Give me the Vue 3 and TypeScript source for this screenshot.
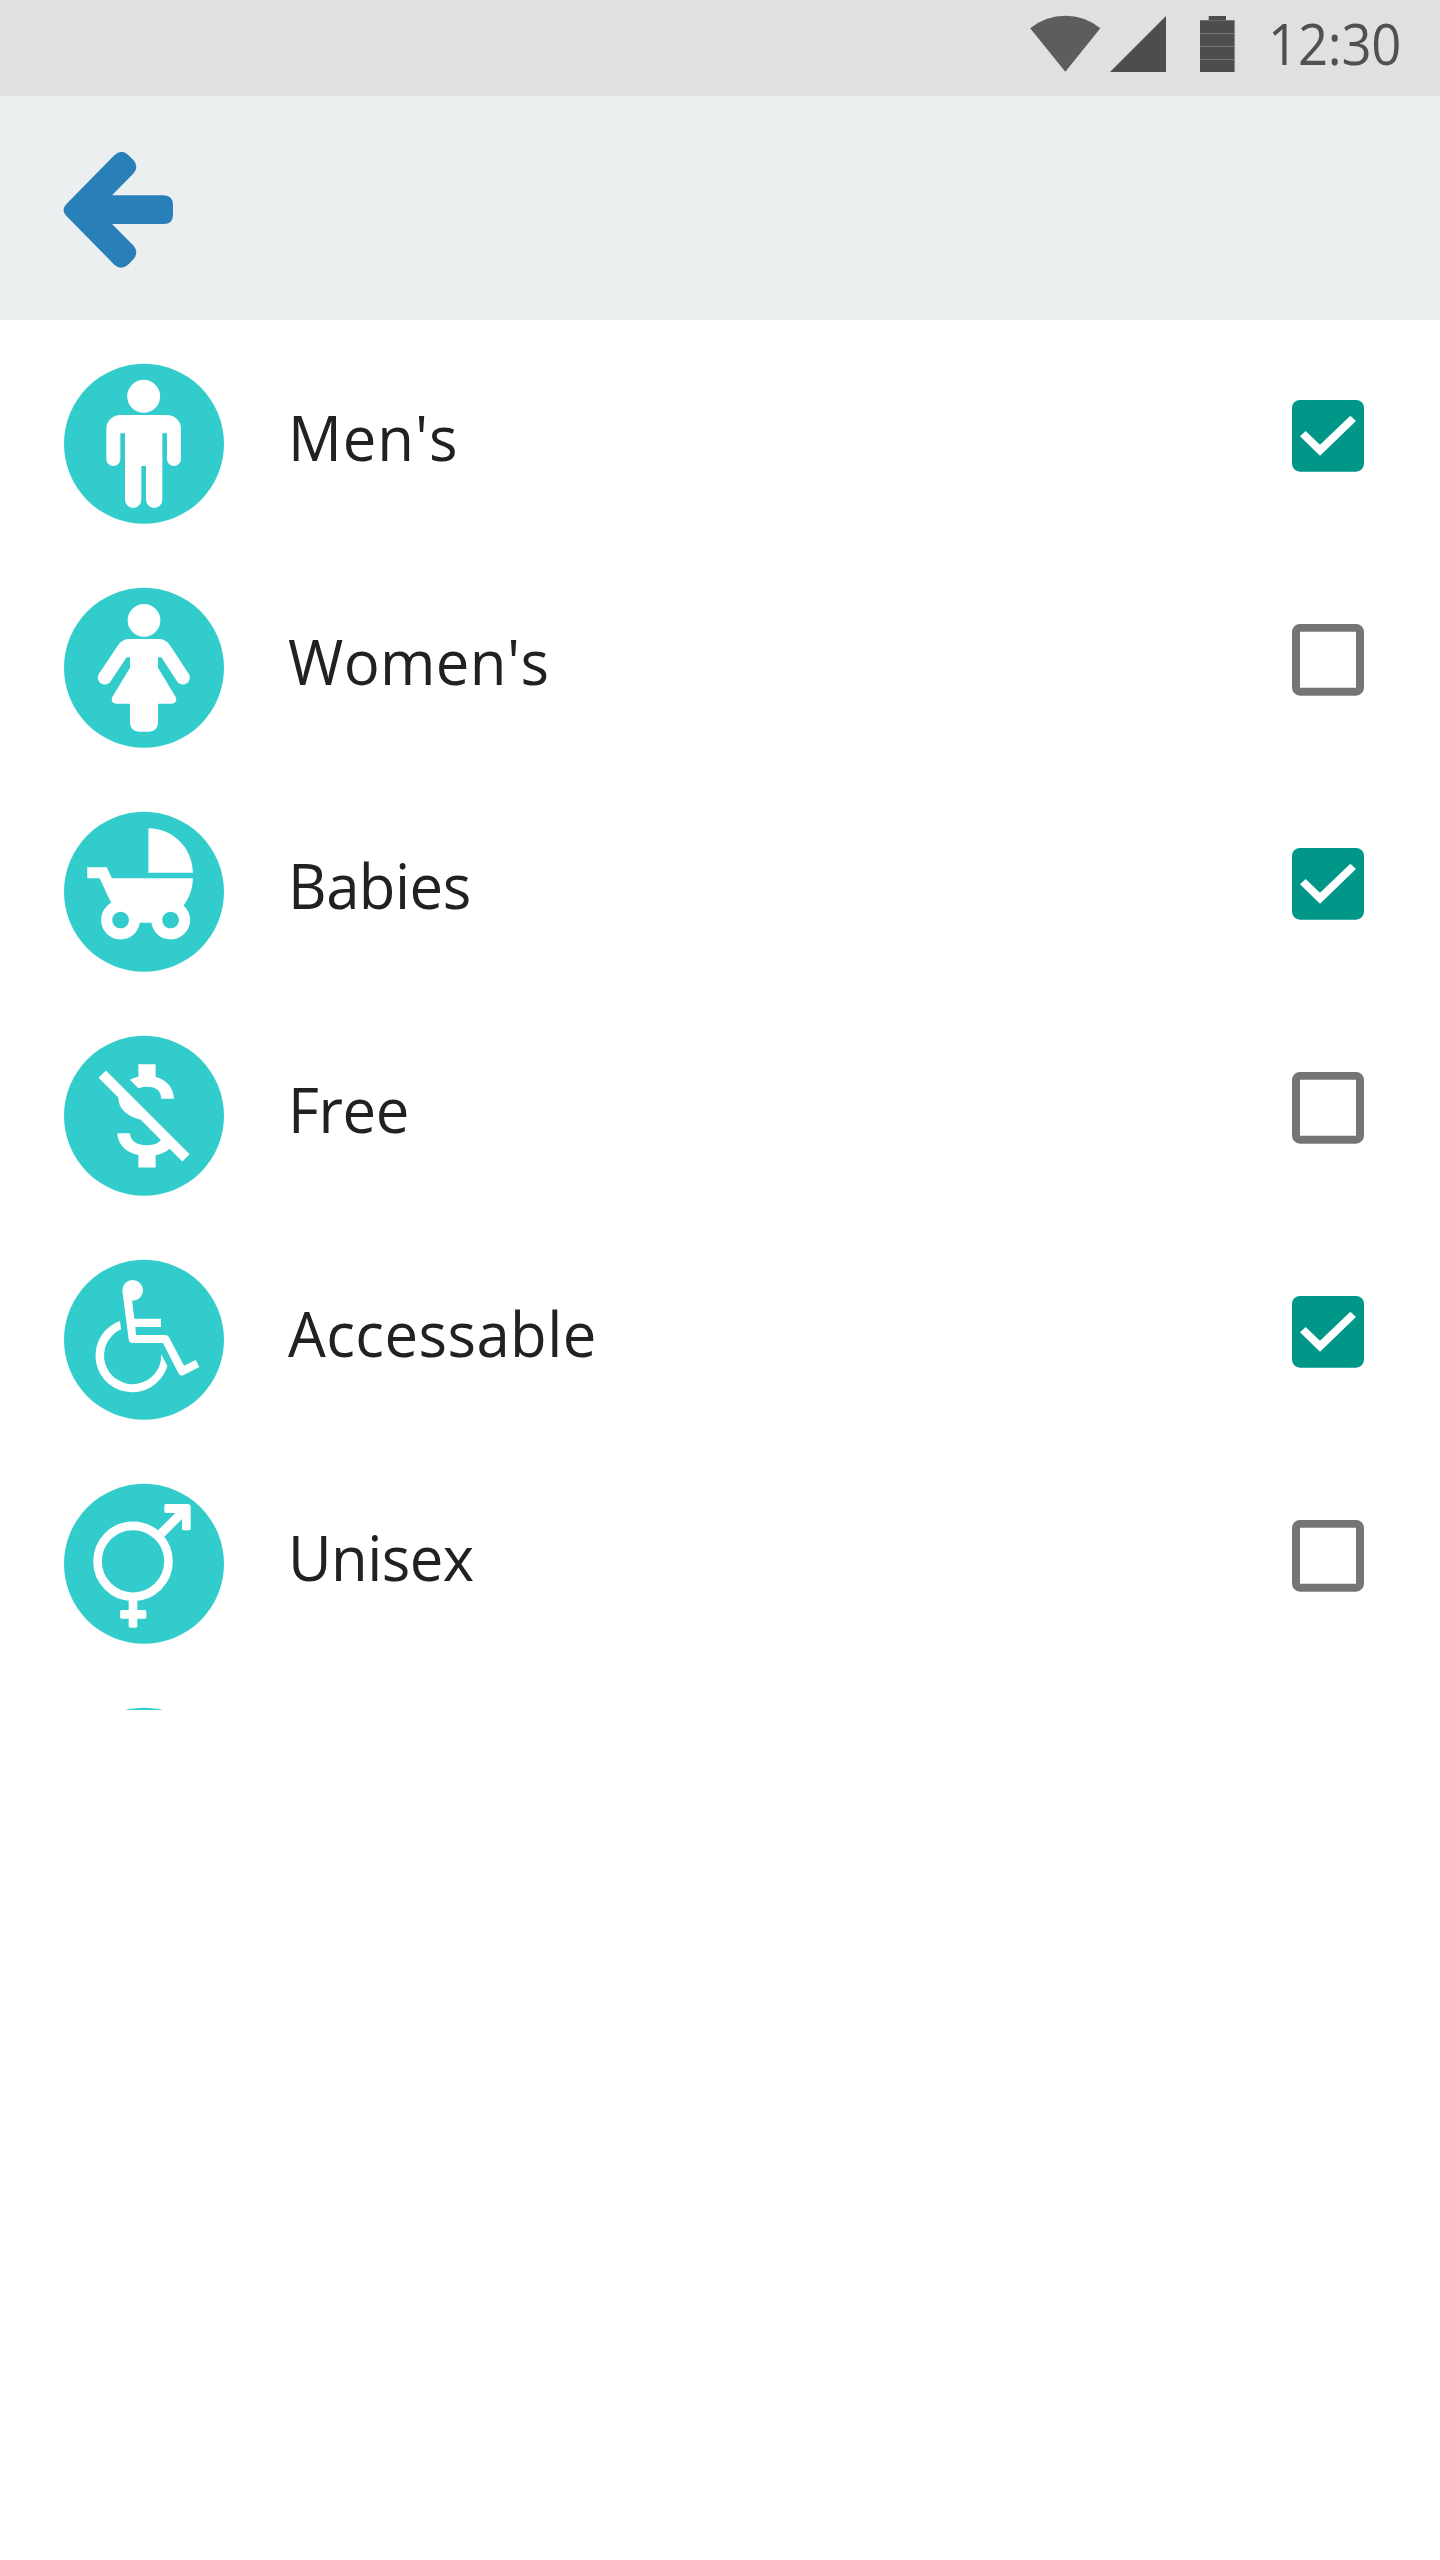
<script setup lang="ts">
import { ref } from 'vue'

interface Category {
  id: string
  label: string
  checked: boolean
  tracking: number
}

const categories = ref<Category[]>([
  { id: 'men', label: "Men's", checked: true, tracking: 1 },
  { id: 'women', label: "Women's", checked: false, tracking: 0.4 },
  { id: 'babies', label: 'Babies', checked: true, tracking: -0.55 },
  { id: 'free', label: 'Free', checked: false, tracking: -0.4 },
  { id: 'accessible', label: 'Accessable', checked: true, tracking: 0.45 },
  { id: 'unisex', label: 'Unisex', checked: false, tracking: -0.6 },
  { id: 'more', label: '', checked: false, tracking: 0 },
])

function toggle(item: Category) {
  item.checked = !item.checked
}
</script>

<template>
  <main class="screen">
    <div class="status">
      <svg class="status-icons" viewBox="90 45 615 171" aria-hidden="true">
        <path class="wifi" d="M90.500 85Q138 47.500 196 47.500T301 85L196 215.500Z" />
        <path class="solid" d="M330 216L498 48V216Z" />
        <path class="battery-edge" d="M600 60H704.500V216H600Z" />
        <path class="solid" d="M626 48H678V61H626ZM600 63H702V99H600ZM600 102H702V138H600ZM600 141H702V177H600ZM600 180H702V216H600Z" />
      </svg>
      <span class="time">12:30</span>
    </div>

    <header class="toolbar">
      <button class="back" aria-label="Back">
        <svg viewBox="69 180 333 360">
          <path d="M80 341L223 196Q243 176 264 194L281 211Q297 230 281 250L216 316H371Q399 317 399 345V374Q399 402 371 402H216L281 467Q297 487 281 507L264 524Q243 542 223 524L80 379Q61 360 80 341Z" />
        </svg>
      </button>
    </header>

    <ul class="list">
      <li v-for="item in categories" :key="item.id" class="row" @click="toggle(item)">
        <svg class="badge" viewBox="42 42 480 480" aria-hidden="true">
          <circle class="disc" cx="282" cy="281.500" r="240" />
          <g v-if="item.id === 'men'">
            <circle cx="281" cy="139" r="49.500" />
            <path d="M211 195H351A42 42 0 0 1 393 237V327A21 21 0 0 1 351 327V250H337V449A24.500 25 0 0 1 288 449V348H274V449A24.500 25 0 0 1 225 449V250H211V327A21 21 0 0 1 169 327V237A42 42 0 0 1 211 195Z" />
          </g>
          <g v-else-if="item.id === 'women'">
            <circle cx="282" cy="139" r="49" />
            <path d="M238 195H326Q346 195 359 212L417 301A21 21 0 0 1 383 325L334 250H324V281L377 369Q384 384 368 389H324V447Q323 470 299 473H265Q241 470 240 447V389H196Q180 384 187 369L240 281V250H230L180 325A21 21 0 0 1 146 301L205 212Q218 195 238 195Z" />
          </g>
          <path
            v-else-if="item.id === 'babies'"
            transform="translate(78.500 57.500) scale(16.670)"
            d="M13 2v8h8c0-4.420-3.580-8-8-8zm6.320 13.890C20.370 14.540 21 12.840 21 11H6.440l-.950-2H2v2h2.220s1.890 4.070 2.120 4.420c-1.100.590-1.840 1.750-1.840 3.080C4.500 20.430 6.070 22 8 22c1.760 0 3.220-1.300 3.460-3h2.080c.240 1.700 1.700 3 3.460 3 1.930 0 3.500-1.570 3.500-3.500 0-1.040-.460-1.970-1.180-2.610zM8 20c-.830 0-1.500-.670-1.500-1.500S7.170 17 8 17s1.500.670 1.500 1.500S8.830 20 8 20zm9 0c-.830 0-1.500-.670-1.500-1.500s.670-1.500 1.500-1.500 1.500.670 1.500 1.500-.670 1.500-1.500 1.500z"
          />
          <path
            v-else-if="item.id === 'free'"
            transform="translate(76 75.400) scale(17.200)"
            d="M12.500 6.900c1.780 0 2.440.850 2.500 2.100h2.210c-.070-1.720-1.120-3.300-3.210-3.810V3h-3v2.160c-.530.120-1.030.300-1.480.540l1.470 1.470c.410-.170.910-.270 1.510-.270zM5.330 4.060L4.060 5.330 7.500 8.770c0 2.080 1.560 3.210 3.910 3.910l3.510 3.510c-.340.480-1.050.910-2.420.910-2.060 0-2.870-.920-2.980-2.100h-2.200c.120 2.190 1.760 3.420 3.680 3.830V21h3v-2.150c.960-.180 1.820-.550 2.450-1.120l2.220 2.220 1.270-1.270L5.330 4.060z"
          />
          <g v-else-if="item.id === 'accessible'">
            <circle cx="248" cy="133" r="31" />
            <path d="M217.500 137L236 280Q237 291 248 291H339L385 381Q391 392 401 387L448 363L437 342L402 359L357 274Q353 267 345 267H258L256 243H333V218H253L246 162Z" />
            <path d="M210 225A110 110 0 1 0 352 360L334 325A86 86 0 1 1 213 250Z" />
          </g>
          <g v-else-if="item.id === 'unisex'">
            <circle class="ring" cx="249" cy="274" r="106.500" />
            <path d="M348 102H412Q422 102 422 112V176Q422 181 417 181H401Q396 181 396 176V147L343 200L324 181L376 129H348Q343 129 343 124V107Q343 102 348 102Z" />
            <path d="M236 388H262V420H284Q289 420 289 425V441Q289 446 284 446H262V468Q262 473 257 473H241Q236 473 236 468V446H215Q210 446 210 441V425Q210 420 215 420H236Z" />
          </g>
        </svg>
        <span class="label" :style="{ letterSpacing: item.tracking + 'px' }">{{ item.label }}</span>
        <svg class="check" viewBox="0 0 216 216" aria-hidden="true">
          <template v-if="item.checked">
            <rect class="check-on" width="216" height="215" rx="24" />
            <path d="M24 109L41 93L84 134L175 47L192 63L84 167Z" />
          </template>
          <path
            v-else
            class="check-off"
            fill-rule="evenodd"
            d="M24 0H192A24 24 0 0 1 216 24V191A24 24 0 0 1 192 215H24A24 24 0 0 1 0 191V24A24 24 0 0 1 24 0ZM24 23.500V191.500H192V23.500Z"
          />
        </svg>
      </li>
    </ul>
  </main>
</template>

<style>
body {
  margin: 0;
  background: #fff;
}
</style>

<style scoped>
.screen {
  width: 1440px;
  height: 2560px;
  overflow: hidden;
  background: #fff;
  font-family: 'Segoe UI', 'Open Sans', 'Noto Sans', sans-serif;
}
.status {
  display: flex;
  justify-content: flex-end;
  box-sizing: border-box;
  height: 96px;
  padding-right: 35px;
  background: #e0e0e0;
}
.status-icons {
  width: 205px;
  height: 57px;
  margin: 15px 33px 0 0;
}
.wifi {
  fill: #5d5d5d;
}
.solid {
  fill: #4d4d4d;
}
.battery-edge {
  fill: #757575;
}
.time {
  width: 137px;
  font-size: 56px;
  line-height: 86px;
  letter-spacing: -0.2px;
  white-space: nowrap;
  color: #505050;
  transform: scaleX(0.94);
  transform-origin: 0 0;
}
.toolbar {
  box-sizing: border-box;
  height: 224px;
  padding: 54px 63px 0;
  background: #ebeff0;
}
.back {
  display: block;
  width: 111px;
  height: 120px;
  padding: 0;
  border: 0;
  background: none;
}
.back svg {
  display: block;
  width: 111px;
  height: 120px;
  fill: #2980b9;
}
.list {
  box-sizing: border-box;
  height: 1390px;
  margin: 0;
  padding: 12px 0 0;
  overflow: hidden;
  list-style: none;
}
.row {
  display: flex;
  align-items: center;
  box-sizing: border-box;
  height: 224px;
  padding: 0 76px 16px 64px;
}
.badge {
  flex: none;
  align-self: flex-end;
  width: 160px;
  height: 160px;
  margin-bottom: 16px;
  overflow: visible;
  fill: #fff;
}
.disc {
  fill: #33cccc;
}
.ring {
  fill: none;
  stroke: #fff;
  stroke-width: 26px;
}
.label {
  flex: 1;
  margin-left: 64px;
  padding-top: 1px;
  font-size: 63px;
  line-height: 86px;
  white-space: nowrap;
  color: #212121;
  transform: scaleX(0.95);
  transform-origin: 0 0;
}
.check {
  flex: none;
  width: 72px;
  height: 72px;
  fill: #fff;
}
.check-on {
  fill: #009688;
}
.check-off {
  fill: #757575;
}
</style>
